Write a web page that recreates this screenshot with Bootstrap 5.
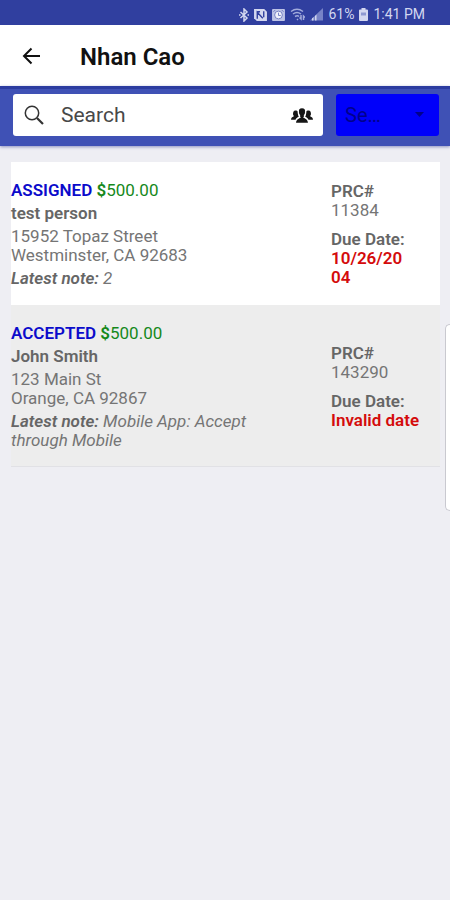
<!DOCTYPE html>
<html lang="en">
<head>
<meta charset="utf-8">
<meta name="viewport" content="width=device-width, initial-scale=1">
<title>Nhan Cao</title>
<link href="https://cdn.jsdelivr.net/npm/bootstrap@5.3.0/dist/css/bootstrap.min.css" rel="stylesheet">
<style>
  body { font-family: Roboto, "Liberation Sans", sans-serif; font-size: 17px; line-height: 19px; background: #eeeef3; color: #757575; }
  .status-bar { height: 25px; background: #303f9f; color: #d3d7f0; font-size: 14px; padding-right: 25px; padding-top: 4px; gap: 5px; }
  .title-bar { height: 61px; padding-left: 21px; gap: 38px; color: #111; }
  .title-bar h1 { font-size: 24px; line-height: 28px; font-weight: 600; padding-top: 3px; }
  .search-bar { background: #3f51b5; border-top: 3px solid #2c3ca0; padding: 5px 11px 10px 13px; gap: 13px; box-shadow: 0 1px 3px #8d93c0; }
  .search-box { height: 42px; border-radius: 3px; padding: 0 10px 0 11px; gap: 17px; color: #222; min-width: 0; }
  .search-box input { font-size: 21px; line-height: 24px; color: #222; outline: 0; min-width: 0; }
  .search-box input::placeholder { color: #484848; opacity: 1; }
  .filter-box { width: 103px; height: 42px; background: #0000fa; border-radius: 3px; color: #00008c; }
  .filter-box select { appearance: none; background: transparent; color: inherit; font-size: 20px; padding: 0 24px 0 9px; }
  .filter-box svg { right: 15px; top: 18px; pointer-events: none; }
  .jobs { padding: 16px 10px 0 11px; }
  .job { padding: 19px 0 17px; }
  .job-open { background: #fff; }
  .job-taken { background: #ededed; box-shadow: inset 0 -1px #e1e1e5; }
  .job-main { gap: 4px; padding-right: 56px; }
  .job-side { width: 109px; padding-right: 19px; gap: 10px; }
  .job strong, .job h2 { font-weight: 600; color: #666; }
  .job h2 { font-size: 17px; line-height: 19px; }
  .job .job-state { color: #0b0bcb; }
  .job-price, .job .job-price strong { color: #16891b; }
  .job .job-due { color: #d40b0b; }
  .edge-handle { right: 0; top: 324px; width: 5px; height: 187px; background: #fff; border: 1px solid #c9c9d0; border-right: 0; border-radius: 5px 0 0 5px; }
</style>
<script src="https://cdn.jsdelivr.net/npm/bootstrap@5.3.0/dist/js/bootstrap.bundle.min.js"></script>
</head>
<body class="position-relative min-vh-100">
<div class="status-bar d-flex justify-content-end align-items-center">
  <svg width="10" height="14" viewBox="0 0 10 14" fill="none" stroke="currentColor" stroke-width="1.5" aria-hidden="true"><path d="M1.500 4 8 10 5 13V1l3 3-6.500 6"/><path d="M0 7h1.500M8.500 7H10"/></svg>
  <svg width="13" height="12" viewBox="0 0 14 13" aria-hidden="true"><path d="M0 0h11l3 3v10H3l-3-3z" fill="currentColor"/><path d="M3.500 10.500V3.500l6 6.500M10.500 9V2.500M3.500 3l3 0" fill="none" stroke="#303f9f" stroke-width="1.500"/></svg>
  <svg width="13" height="12" viewBox="0 0 14 13" aria-hidden="true"><rect width="14" height="13" rx="1" fill="#bdc3e6"/><circle cx="7" cy="6.500" r="4.200" fill="#f0f1fb" stroke="#6f7bc0"/><path d="M7 4v3h2.500M1.500 3l2-2M12.500 3l-2-2" fill="none" stroke="#6f7bc0"/></svg>
  <svg width="15" height="13" viewBox="0 0 15 13" fill="none" stroke="#a2abdc" stroke-width="1.500" aria-hidden="true"><path d="M1 3.500q6-4.500 12 0M3 6q4-3 8 0M5 8.500q2.500-1.500 4 0"/><path d="m7 11 1 1M11 7v4l-1.500-1.500M13.500 12V8l1.500 1.500"/></svg>
  <svg width="13" height="13" viewBox="0 0 13 13" aria-hidden="true"><path d="M0 12.500 13 0v12.500z" fill="#7783c7"/><path d="M2 10.500v2h1.500V9zM5 8v4.500h1.500V6.500z" fill="#d3d7f0"/></svg>
  <span>61%</span>
  <svg width="9" height="13" viewBox="0 0 9 13" aria-hidden="true"><path d="M2.500 0h4v1.500H8q1 0 1 1V12q0 1-1 1H1q-1 0-1-1V2.500q0-1 1-1h1.500z" fill="currentColor"/><path d="M2 4.500h5v3H2z" fill="#8e98d1"/></svg>
  <span>1:41 PM</span>
</div>
<header class="title-bar bg-white d-flex align-items-center">
  <button type="button" class="btn p-0 border-0 d-flex" aria-label="Back">
    <svg width="21" height="20" viewBox="0 0 21 20" fill="none" stroke="#111" stroke-width="2"><path d="M19 10H3M10.500 2.500 3 10l7.500 7.500"/></svg>
  </button>
  <h1 class="m-0">Nhan Cao</h1>
</header>
<div class="search-bar d-flex">
  <div class="search-box bg-white d-flex align-items-center flex-fill">
    <svg class="flex-shrink-0" width="20" height="20" viewBox="0 0 20 20" fill="none" stroke="#333" stroke-width="1.500" aria-hidden="true"><circle cx="8" cy="8" r="6.700"/><path d="m13 13 6 6" stroke-width="2.200"/></svg>
    <input type="search" class="border-0 bg-transparent p-0 w-100" placeholder="Search" aria-label="Search">
    <svg class="flex-shrink-0" width="22" height="15" viewBox="0 0 24 16" fill="#161616" aria-hidden="true">
      <path d="M12 0c2.700 0 3.700 1.700 3.500 4-.1 1.800-.8 3-1.500 3.800v2.500c.5 1.300 4.200 1.400 4.500 5.700h-13c.3-4.300 4-4.400 4.500-5.700V7.800C9.300 7 8.600 5.800 8.500 4 8.300 1.700 9.300 0 12 0z"/>
      <path d="M5 2.500c1.100 0 1.900.4 2.200 1.200.1 2.200.3 3.500 1.300 4.700v.7c-1 .8-2.700 1.600-3.600 3.400H0c.2-2.700 2.200-2.700 3.100-3.600.2-.7-.6-.9-.8-1.700C1.900 4.800 2.700 2.500 5 2.500z"/>
      <path d="M19 2.500c-1.100 0-1.900.4-2.200 1.200-.1 2.200-.3 3.500-1.300 4.700v.7c1 .8 2.700 1.600 3.600 3.400H24c-.2-2.700-2.200-2.700-3.100-3.600-.2-.7.6-.9.8-1.700.4-2.400-.4-4.700-2.700-4.700z"/>
      <path d="M8.200 1.500v6l2 3M15.800 1.500v6l-2 3" fill="none" stroke="#fff"/>
    </svg>
  </div>
  <div class="filter-box position-relative flex-shrink-0">
    <select class="border-0 w-100 h-100" aria-label="Filter"><option>Se…</option></select>
    <svg class="position-absolute" width="9" height="5" viewBox="0 0 9 5" fill="currentColor" aria-hidden="true"><path d="M0 0h9L4.500 5z"/></svg>
  </div>
</div>
<main class="jobs">
  <article class="job job-open d-flex align-items-center">
    <div class="job-main d-flex flex-column flex-grow-1">
      <div><strong class="job-state">ASSIGNED</strong> <span class="job-price"><strong>$</strong>500.00</span></div>
      <h2 class="m-0">test person</h2>
      <div>15952 Topaz Street<br>Westminster, CA 92683</div>
      <div class="fst-italic"><strong>Latest note:</strong> 2</div>
    </div>
    <div class="job-side d-flex flex-column flex-shrink-0">
      <div><strong>PRC#</strong><br>11384</div>
      <div><strong>Due Date:</strong><br><strong class="job-due">10/26/20<wbr>04</strong></div>
    </div>
  </article>
  <article class="job job-taken d-flex align-items-center">
    <div class="job-main d-flex flex-column flex-grow-1">
      <div><strong class="job-state">ACCEPTED</strong> <span class="job-price"><strong>$</strong>500.00</span></div>
      <h2 class="m-0">John Smith</h2>
      <div>123 Main St<br>Orange, CA 92867</div>
      <div class="fst-italic"><strong>Latest note:</strong> Mobile App: Accept through Mobile</div>
    </div>
    <div class="job-side d-flex flex-column flex-shrink-0">
      <div><strong>PRC#</strong><br>143290</div>
      <div><strong>Due Date:</strong><br><strong class="job-due">Invalid date</strong></div>
    </div>
  </article>
</main>
<div class="edge-handle position-absolute" aria-hidden="true"></div>
</body>
</html>
